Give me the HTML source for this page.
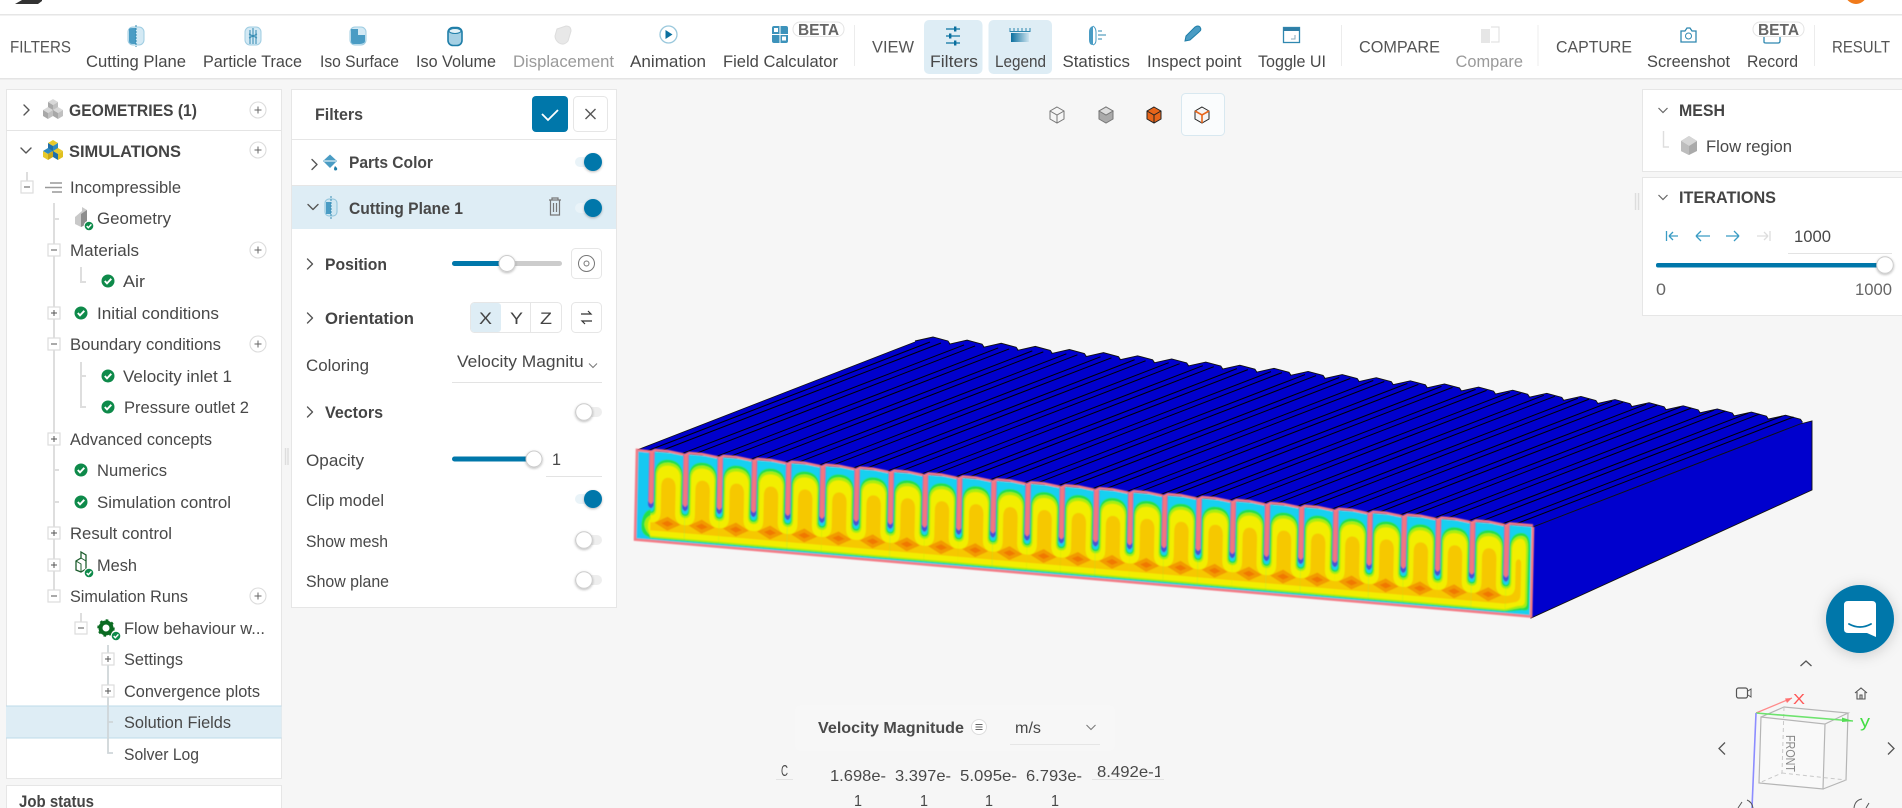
<!DOCTYPE html>
<html lang="en">
<head>
<meta charset="utf-8">
<title>Filters</title>
<style>
html,body{margin:0;padding:0;background:#f6f6f6;overflow:hidden}
svg{display:block}
text{font-family:"Liberation Sans",Arial,sans-serif;font-size:17px;fill:#484848}
.s{font-size:16.5px}
.h{font-size:17px}
.b{font-weight:700;fill:#444}
.g{fill:#9a9a9a}
.n{fill:none;stroke:#555;stroke-width:1.4;stroke-linecap:round;stroke-linejoin:round}
.l{fill:none;stroke:#dedede;stroke-width:2}
.p{fill:#fff;stroke:#e6e6e6;stroke-width:1}
</style>
</head>
<body>
<svg xmlns="http://www.w3.org/2000/svg" width="1902" height="808" viewBox="0 0 1902 808">
<defs>
<filter id="bl" x="-2%" y="-10%" width="104%" height="120%"><feGaussianBlur stdDeviation="0.6"/></filter>
<filter id="sh" x="-20%" y="-20%" width="140%" height="140%"><feDropShadow dx="0" dy="1" stdDeviation="1.2" flood-color="#000" flood-opacity=".28"/></filter>
<filter id="sc" x="-30%" y="-30%" width="160%" height="160%"><feDropShadow dx="0" dy="2" stdDeviation="7" flood-color="#000" flood-opacity=".18"/></filter>
<linearGradient id="lg" x1="0" x2="1" y1="0" y2="0"><stop offset="0" stop-color="#0a6f9e"/><stop offset="1" stop-color="#cde4ef"/></linearGradient>
<clipPath id="cv"><rect x="450" y="345" width="134" height="30"/></clipPath>
<clipPath id="cl"><rect x="1090" y="755" width="70" height="30"/></clipPath>

<g id="c">
<rect width="34.4" height="90" fill="#16d0f0"/>
<path d="M0,60Q3.2,60 3.2,55V22C3.2,12 9,7 17.2,7C25.4,7 31.2,12 31.2,22V55Q31.2,60 34.4,60V87H0Z" fill="#22e04a"/>
<path d="M0,62Q4.4,62 4.4,56V23C4.4,14 10,10 17.2,10C24.4,10 30,14 30,23V56Q30,62 34.4,62V86H0Z" fill="#a8ee10"/>
<path d="M0,64Q5.6,64 5.6,57V25C5.6,16 11,13 17.2,13C23.4,13 28.8,16 28.8,25V57Q28.8,64 34.4,64V84.5H0Z" fill="#f2ee00"/>
<path d="M0,71Q10,71 10,60V35C10,28 13,25 17.2,25C21.4,25 24.4,28 24.4,35V60Q24.4,71 34.4,71V79H0Z" fill="#f6c800"/>
<path d="M17,64L30,71L17,78L4,71Z" fill="#f29a00"/>
<path d="M17,68L23,71L17,74L11,71Z" fill="#f07800"/>
<path d="M-2.9,0V54Q0,60 2.9,54V0Z" fill="#4a52d0"/>
<path d="M-2.3,0V50Q0,55 2.3,50V0Z" fill="#f2747f"/>
<path d="M-2,1.5L3,-1.5H16L32,.5" fill="none" stroke="#f47a85" stroke-width="2.6"/>
</g>

<path id="fl" d="M647,451L930,342M658,452L941,343" stroke="#000" stroke-width="1" fill="none"/>
<g id="bp">
<polygon points="915,341 933,337 948,341 950,344 950,350 915,350" fill="#0000cd"/>
<path d="M915,341L933,337L948,341L950,344" fill="none" stroke="#111" stroke-width=".9"/>
</g>

<g id="ck"><circle r="6.5" fill="#0e8a4a"/><path d="M-3.2,0L-1,2.4L3.3,-2.2" fill="none" stroke="#fff" stroke-width="1.9"/></g>
<g id="ckb"><circle r="4.8" fill="#0e8a4a" stroke="#fff" stroke-width="1"/><path d="M-2.3,0L-.7,1.7L2.4,-1.6" fill="none" stroke="#fff" stroke-width="1.4"/></g>
<g id="mi"><rect x="-6" y="-6" width="12" height="12" fill="#fff" stroke="#ddd" stroke-width="1.2"/><path d="M-3,0H3" stroke="#555"/></g>
<g id="pl"><rect x="-6" y="-6" width="12" height="12" fill="#fff" stroke="#ddd" stroke-width="1.2"/><path d="M-3,0H3M0,-3V3" stroke="#555"/></g>
<g id="pc"><circle r="8" fill="#fff" stroke="#dcdcdc" stroke-width="1.1"/><path d="M-3.5,0H3.5M0,-3.5V3.5" stroke="#666" stroke-width="1"/></g>
<g id="cu"><path d="M-5,-2L0,-5L5,-2L0,1Z" fill="#d8d8d8"/><path d="M-5,-2V4L0,7V1Z" fill="#a8a8a8"/><path d="M5,-2V4L0,7V1Z" fill="#c0c0c0"/></g>
<g id="off"><rect x="-9" y="-5" width="27" height="10" rx="5" fill="#eee"/><circle r="8.3" fill="#fff" stroke="#ccc" filter="url(#sh)"/></g>
<g id="on"><rect x="-18" y="-5" width="25" height="10" rx="5" fill="#e9f3f8"/><circle r="9" fill="#0077aa" filter="url(#sh)"/></g>
<g id="cyl"><rect x="-8" y="-9" width="16" height="18" rx="5" fill="#d3e9f4" stroke="#9fcde2"/></g>
</defs>

<rect width="1902" height="808" fill="#f6f6f6"/>

<!-- top bars -->
<rect width="1902" height="14" fill="#fff"/>
<rect y="14" width="1902" height="1.5" fill="#e6e6e6"/>
<rect y="15.5" width="1902" height="62.5" fill="#fff"/>
<rect y="78" width="1902" height="1.5" fill="#e4e4e4"/>
<path d="M15,4L22,0H42V1L38,4Z" fill="#333"/>
<circle cx="1856" cy="-7" r="11" fill="#f07a1a"/>
<rect x="924" y="20" width="58.5" height="54" rx="5" fill="#deedf5"/>
<rect x="988.5" y="20" width="63.5" height="54" rx="5" fill="#deedf5"/>
<path d="M854.5,25V66M1341.5,25V66M1538,25V66M1814.5,25V66" stroke="#ececec"/>

<!-- toolbar icons -->
<use href="#cyl" x="136" y="36"/><path d="M129,30Q128,28 133,28H136V44H133Q129,44 129,41Z" fill="#4a9cc4"/><path d="M136,25V47" stroke="#2f88b0" stroke-dasharray="2 1"/>
<use href="#cyl" x="253" y="36"/><path d="M250,30V44M253,28V44M256,30V44M249,38L257,34M249,34L257,38" stroke="#2f88b0" stroke-width="1"/>
<use href="#cyl" x="358" y="36"/><path d="M351,35H365V41Q365,44 358,44H354Q351,44 351,41ZM351,29H358V35H351Z" fill="#4a9cc4"/>
<rect x="448" y="27.5" width="14" height="18" rx="5" fill="#a5d0e4" stroke="#1f7ea8" stroke-width="1.6"/><ellipse cx="455" cy="31" rx="6" ry="2.5" fill="#e4f2f8" stroke="#1f7ea8"/>
<path d="M557,29L566,26Q571,26 571,31L568,41Q564,46 559,43Q555,40 555,36Z" fill="#e8e8e8" stroke="#ddd"/>
<circle cx="668.5" cy="34.5" r="8.5" fill="#fff" stroke="#9ac8dc" stroke-width="1.3"/><path d="M665.5,30V39L672.5,34.5Z" fill="#0a6f9e"/>
<rect x="772" y="26" width="16" height="17" rx="2" fill="#3d93bb"/><path d="M780,26V43M772,34.5H788" stroke="#fff"/><rect x="774" y="28" width="4" height="4" fill="#fff"/><rect x="782" y="36.5" width="4" height="4" fill="#fff"/>
<rect x="793" y="22" width="51" height="14.5" rx="7" fill="#fff" stroke="#e4e4e4"/>
<text x="798" y="35" class="b" style="font-size:16px;fill:#666" textLength="41" lengthAdjust="spacingAndGlyphs">BETA</text>
<path d="M946,29H960M946,36H960M946,43H960" stroke="#2f88b0" stroke-width="1.5"/><rect x="954" y="26.5" width="2.4" height="5" fill="#0a6f9e"/><rect x="949" y="33.5" width="2.4" height="5" fill="#0a6f9e"/><rect x="954" y="40.5" width="2.4" height="5" fill="#0a6f9e"/>
<path d="M1010,28V31.5H1030V28M1014,28V31M1018,28V31M1022,28V31M1026,28V31" stroke="#2f88b0" fill="none"/><rect x="1011" y="33" width="18" height="9" fill="url(#lg)"/>
<path d="M1093,26Q1089,27 1089,32V40Q1089,45 1093,45V26Z" fill="#4a9cc4"/><path d="M1093,26Q1096,28 1096,32V40Q1096,44 1093,45" fill="none" stroke="#4a9cc4"/><path d="M1098,31H1102M1098,35H1106M1098,39H1102" stroke="#2f88b0"/>
<path d="M1185,41L1186,36L1195,27Q1198,25 1200,27Q1202,30 1199,32L1190,40Z" fill="#4a9cc4" stroke="#1f7ea8"/>
<rect x="1283.5" y="27.5" width="16" height="15" fill="#fff" stroke="#2f88b0" stroke-width="1.3"/><rect x="1283.5" y="27.5" width="16" height="3.5" fill="#2f7ea6"/><path d="M1295,35V39H1291" stroke="#8ab" fill="none"/>
<path d="M1481,29H1490V43H1481Z" fill="#e6e6e6"/><path d="M1491,27H1499V42H1491" fill="none" stroke="#ddd"/>
<path d="M1681,31H1685L1687,28H1690L1692,31H1696V42H1681Z" fill="#fff" stroke="#2f88b0" stroke-width="1.3"/><circle cx="1688.5" cy="36" r="3" fill="none" stroke="#2f88b0"/>
<path d="M1764,36V42Q1764,43 1766,43H1778Q1780,43 1780,41V36" fill="none" stroke="#2f88b0" stroke-width="1.3"/>
<rect x="1753" y="22" width="51" height="14.5" rx="7" fill="#fff" stroke="#e4e4e4"/>
<text x="1758" y="35" class="b" style="font-size:16px;fill:#666" textLength="41" lengthAdjust="spacingAndGlyphs">BETA</text>

<!-- toolbar text -->
<text class="h" x="10" y="52.5" textLength="61" lengthAdjust="spacingAndGlyphs" style="fill:#555">FILTERS</text>
<text class="s" x="86" y="67" textLength="100" lengthAdjust="spacingAndGlyphs">Cutting Plane</text>
<text class="s" x="203" y="67" textLength="99" lengthAdjust="spacingAndGlyphs">Particle Trace</text>
<text class="s" x="320" y="67" textLength="79" lengthAdjust="spacingAndGlyphs">Iso Surface</text>
<text class="s" x="416" y="67" textLength="80" lengthAdjust="spacingAndGlyphs">Iso Volume</text>
<text class="s g" x="513" y="67" textLength="101" lengthAdjust="spacingAndGlyphs">Displacement</text>
<text class="s" x="630" y="67" textLength="76" lengthAdjust="spacingAndGlyphs">Animation</text>
<text class="s" x="723" y="67" textLength="115" lengthAdjust="spacingAndGlyphs">Field Calculator</text>
<text class="h" x="872" y="52.5" textLength="42" lengthAdjust="spacingAndGlyphs" style="fill:#555">VIEW</text>
<text class="s" x="930" y="67" textLength="48" lengthAdjust="spacingAndGlyphs">Filters</text>
<text class="s" x="995" y="67" textLength="51" lengthAdjust="spacingAndGlyphs">Legend</text>
<text class="s" x="1062.5" y="67" textLength="67.5" lengthAdjust="spacingAndGlyphs">Statistics</text>
<text class="s" x="1147" y="67" textLength="94.5" lengthAdjust="spacingAndGlyphs">Inspect point</text>
<text class="s" x="1258" y="67" textLength="68" lengthAdjust="spacingAndGlyphs">Toggle UI</text>
<text class="h" x="1359" y="52.5" textLength="81" lengthAdjust="spacingAndGlyphs" style="fill:#555">COMPARE</text>
<text class="s g" x="1455.5" y="67" textLength="67.5" lengthAdjust="spacingAndGlyphs">Compare</text>
<text class="h" x="1556" y="52.5" textLength="76" lengthAdjust="spacingAndGlyphs" style="fill:#555">CAPTURE</text>
<text class="s" x="1647" y="67" textLength="83" lengthAdjust="spacingAndGlyphs">Screenshot</text>
<text class="s" x="1747" y="67" textLength="51" lengthAdjust="spacingAndGlyphs">Record</text>
<text class="h" x="1832" y="52.5" textLength="58" lengthAdjust="spacingAndGlyphs" style="fill:#555">RESULT</text>

<!-- 3D model -->
<polygon points="637,450 915,342 1800,424 1533,527" fill="#0000cd" stroke="#111" stroke-width=".8"/>
<use href="#bp"/><use href="#bp" x="34.1" y="3.13"/><use href="#bp" x="68.2" y="6.26"/><use href="#bp" x="102.3" y="9.39"/><use href="#bp" x="136.4" y="12.52"/><use href="#bp" x="170.5" y="15.65"/><use href="#bp" x="204.6" y="18.78"/><use href="#bp" x="238.7" y="21.91"/><use href="#bp" x="272.8" y="25.04"/><use href="#bp" x="306.9" y="28.17"/><use href="#bp" x="341" y="31.3"/><use href="#bp" x="375.1" y="34.43"/><use href="#bp" x="409.2" y="37.56"/><use href="#bp" x="443.3" y="40.69"/><use href="#bp" x="477.4" y="43.82"/><use href="#bp" x="511.5" y="46.95"/><use href="#bp" x="545.6" y="50.08"/><use href="#bp" x="579.7" y="53.21"/><use href="#bp" x="613.8" y="56.34"/><use href="#bp" x="647.9" y="59.47"/><use href="#bp" x="682" y="62.6"/><use href="#bp" x="716.1" y="65.73"/><use href="#bp" x="750.2" y="68.86"/><use href="#bp" x="784.3" y="71.99"/><use href="#bp" x="818.4" y="75.12"/><use href="#bp" x="852.5" y="78.25"/>
<polygon points="1533,527 1800,424 1812,421 1812,490 1531,618" fill="#0000cd" stroke="#111" stroke-width=".9"/>
<use href="#fl"/><use href="#fl" x="34.1" y="2.96"/><use href="#fl" x="68.2" y="5.92"/><use href="#fl" x="102.3" y="8.88"/><use href="#fl" x="136.4" y="11.84"/><use href="#fl" x="170.5" y="14.8"/><use href="#fl" x="204.6" y="17.76"/><use href="#fl" x="238.7" y="20.72"/><use href="#fl" x="272.8" y="23.68"/><use href="#fl" x="306.9" y="26.64"/><use href="#fl" x="341" y="29.6"/><use href="#fl" x="375.1" y="32.56"/><use href="#fl" x="409.2" y="35.52"/><use href="#fl" x="443.3" y="38.48"/><use href="#fl" x="477.4" y="41.44"/><use href="#fl" x="511.5" y="44.4"/><use href="#fl" x="545.6" y="47.36"/><use href="#fl" x="579.7" y="50.32"/><use href="#fl" x="613.8" y="53.28"/><use href="#fl" x="647.9" y="56.24"/><use href="#fl" x="682" y="59.2"/><use href="#fl" x="716.1" y="62.16"/><use href="#fl" x="750.2" y="65.12"/><use href="#fl" x="784.3" y="68.08"/><use href="#fl" x="818.4" y="71.04"/><use href="#fl" x="852.5" y="74"/>

<g transform="matrix(1,.0859,-.022,1,637,450)" filter="url(#bl)">
<rect x="0" y="0" width="16" height="89" fill="#16c8f2"/>
<path d="M15,58C9,60 6,66 6,76Q6,84 14,86L15,88Z" fill="#22e04a"/>
<path d="M15,64C11,66 9,70 9,74Q10,80 15,84Z" fill="#a8ee10"/>
<path d="M15,67C13,70 12,73 13,78L15,84Z" fill="#f2ee00"/>
<use href="#c" x="15"/><use href="#c" x="49.2"/><use href="#c" x="83.4"/><use href="#c" x="117.6"/><use href="#c" x="151.8"/><use href="#c" x="186"/><use href="#c" x="220.2"/><use href="#c" x="254.4"/><use href="#c" x="288.6"/><use href="#c" x="322.8"/><use href="#c" x="357"/><use href="#c" x="391.2"/><use href="#c" x="425.4"/><use href="#c" x="459.6"/><use href="#c" x="493.8"/><use href="#c" x="528"/><use href="#c" x="562.2"/><use href="#c" x="596.4"/><use href="#c" x="630.6"/><use href="#c" x="664.8"/><use href="#c" x="699"/><use href="#c" x="733.2"/><use href="#c" x="767.4"/><use href="#c" x="801.6"/><use href="#c" x="835.8"/>
<g transform="translate(870,0)">
<rect width="26" height="89.5" fill="#16d0f0"/>
<path d="M0,60Q3.2,60 3.2,55V22C3.2,12 9,7 15,7C21,7 23.5,12 23.5,22V80Q23.5,85 17,84L0,87Z" fill="#22e04a"/>
<path d="M0,62Q4.4,62 4.4,56V23C4.4,14 10,10 15,10C20,10 21.5,14 21.5,23V77Q21.5,82 15,82L0,86Z" fill="#a8ee10"/>
<path d="M0,64Q5.6,64 5.6,57V25C5.6,16 11,13 14,13C18,13 19.5,16 19.5,25V75Q19.5,80 13,80L0,84.5Z" fill="#f2ee00"/>
<path d="M0,71Q9.5,71 9.5,60V38C10,32 15,32 15,38V69Q15,76 8,77L0,79Z" fill="#f6c800"/>
<path d="M-2.9,0V54Q0,60 2.9,54V0Z" fill="#4a52d0"/>
<path d="M-2.3,0V50Q0,55 2.3,50V0Z" fill="#f2747f"/>
<path d="M-2,1.5L3,-1.5H26" fill="none" stroke="#f47a85" stroke-width="2.6"/>
</g>
<path d="M15,.5L0,0V89.5H896V0" fill="none" stroke="#f47a85" stroke-width="2.6"/>
</g>

<!-- left panels -->
<rect class="p" x="6.5" y="89.5" width="275" height="689"/>
<path d="M6,130.5H281" stroke="#e4e4e4"/>
<rect class="p" x="6.5" y="785.5" width="275" height="40"/>
<rect x="6" y="706" width="275.5" height="32" fill="#deedf5"/>
<path d="M6,706H281.5M6,738H281.5" stroke="#bddbe9"/>
<path d="M285.5,448V465M288,448V465" stroke="#ddd" stroke-width="1.4"/>

<path class="n" d="M24,105L29,110L24,115"/>
<path class="n" d="M21,148L26,153L31,148"/>
<use href="#cu" x="53" y="104"/><use href="#cu" x="48" y="112"/><use href="#cu" x="58" y="112"/>
<g transform="translate(53,145)"><path d="M-5,-2L0,-5L5,-2L0,1Z" fill="#e8c92a"/><path d="M-5,-2V4L0,7V1Z" fill="#1f6fa8"/><path d="M5,-2V4L0,7V1Z" fill="#2f8bc0"/></g>
<g transform="translate(48,153)"><path d="M-5,-2L0,-5L5,-2L0,1Z" fill="#2f8bc0"/><path d="M-5,-2V4L0,7V1Z" fill="#e8c92a"/><path d="M5,-2V4L0,7V1Z" fill="#c9a81a"/></g>
<g transform="translate(58,153)"><path d="M-5,-2L0,-5L5,-2L0,1Z" fill="#e8c92a"/><path d="M-5,-2V4L0,7V1Z" fill="#1f6fa8"/><path d="M5,-2V4L0,7V1Z" fill="#e0c020"/></g>

<use href="#pc" x="258" y="110"/><use href="#pc" x="258" y="150"/><use href="#pc" x="258" y="250"/><use href="#pc" x="258" y="344"/><use href="#pc" x="258" y="596"/>

<!-- tree lines -->
<path class="l" d="M27,172V181M54,203V592M54,219H59M54,470H59M54,502H59M81,267V282H86M81,362V407H86M81,376H86M81,613V622"/>
<path d="M108,645V753H113M108,722H113" fill="none" stroke="#cfd6d9" stroke-width="1.8"/>
<use href="#mi" x="27" y="187"/><use href="#mi" x="54" y="250"/><use href="#pl" x="54" y="313"/><use href="#mi" x="54" y="344"/><use href="#pl" x="54" y="439"/><use href="#pl" x="54" y="533"/><use href="#pl" x="54" y="565"/><use href="#mi" x="54" y="596"/><use href="#mi" x="81" y="628"/><use href="#pl" x="108" y="659"/><use href="#pl" x="108" y="691"/>

<path d="M50,183H62M45,187.5H62M52,192H62" stroke="#999" stroke-width="1.4"/>
<path d="M75,217L82,211V207L87,210V224L81,227L75,224Z" fill="#c9c9c9"/><path d="M81,214L87,210V224L81,227Z" fill="#8d8d8d"/>
<use href="#ckb" x="89" y="226"/>
<use href="#ck" x="108" y="281"/><use href="#ck" x="81" y="313"/><use href="#ck" x="108" y="376"/><use href="#ck" x="108" y="407"/><use href="#ck" x="81" y="470"/><use href="#ck" x="81" y="502"/>
<path d="M76,570V561L81,558V552L86,555V569L81,572Z" fill="#fff" stroke="#1d5d2e" stroke-width="1.3"/><path d="M81,558L86,561M76,561L81,564V572" fill="none" stroke="#1d5d2e"/>
<use href="#ckb" x="89" y="573"/>
<g transform="translate(106,628)"><circle r="5.5" fill="none" stroke="#0b6b22" stroke-width="4"/><circle r="7.5" fill="none" stroke="#0b6b22" stroke-width="2.4" stroke-dasharray="2.6 3.2"/></g>
<use href="#ckb" x="116" y="636"/>

<text class="b" x="69" y="116" textLength="128" lengthAdjust="spacingAndGlyphs">GEOMETRIES (1)</text>
<text class="b" x="69" y="157" textLength="112" lengthAdjust="spacingAndGlyphs">SIMULATIONS</text>
<text x="70" y="193" textLength="111" lengthAdjust="spacingAndGlyphs">Incompressible</text>
<text x="97" y="224" textLength="74" lengthAdjust="spacingAndGlyphs">Geometry</text>
<text x="70" y="256" textLength="69" lengthAdjust="spacingAndGlyphs">Materials</text>
<text x="123" y="287" textLength="22" lengthAdjust="spacingAndGlyphs">Air</text>
<text x="97" y="319" textLength="122" lengthAdjust="spacingAndGlyphs">Initial conditions</text>
<text x="70" y="350" textLength="151" lengthAdjust="spacingAndGlyphs">Boundary conditions</text>
<text x="123" y="382" textLength="109" lengthAdjust="spacingAndGlyphs">Velocity inlet 1</text>
<text x="124" y="413" textLength="125" lengthAdjust="spacingAndGlyphs">Pressure outlet 2</text>
<text x="70" y="445" textLength="142" lengthAdjust="spacingAndGlyphs">Advanced concepts</text>
<text x="97" y="476" textLength="70" lengthAdjust="spacingAndGlyphs">Numerics</text>
<text x="97" y="508" textLength="134" lengthAdjust="spacingAndGlyphs">Simulation control</text>
<text x="70" y="539" textLength="102" lengthAdjust="spacingAndGlyphs">Result control</text>
<text x="97" y="571" textLength="40" lengthAdjust="spacingAndGlyphs">Mesh</text>
<text x="70" y="602" textLength="118" lengthAdjust="spacingAndGlyphs">Simulation Runs</text>
<text x="124" y="634" textLength="141" lengthAdjust="spacingAndGlyphs">Flow behaviour w...</text>
<text x="124" y="665" textLength="59" lengthAdjust="spacingAndGlyphs">Settings</text>
<text x="124" y="697" textLength="136" lengthAdjust="spacingAndGlyphs">Convergence plots</text>
<text x="124" y="728" textLength="107" lengthAdjust="spacingAndGlyphs">Solution Fields</text>
<text x="124" y="760" textLength="75" lengthAdjust="spacingAndGlyphs">Solver Log</text>
<text class="b" x="19" y="807" textLength="75" lengthAdjust="spacingAndGlyphs">Job status</text>

<!-- filters panel -->
<rect class="p" x="291.5" y="89.5" width="325" height="518"/>
<path d="M292,139.5H616M292,185.5H616" stroke="#e6e6e6"/>
<rect x="292" y="186" width="324" height="43" fill="#deedf5"/>
<text x="315" y="120" textLength="48" lengthAdjust="spacingAndGlyphs" style="font-weight:700;fill:#484848">Filters</text>
<rect x="532" y="96" width="36" height="36" rx="4" fill="#0077aa"/><path d="M542,114L548,120L558,110" fill="none" stroke="#fff" stroke-width="1.8"/>
<rect x="573.5" y="96.5" width="34" height="35" rx="4" fill="#fff" stroke="#e6e6e6"/><path d="M585.5,109L595.5,119M595.5,109L585.5,119" stroke="#555" stroke-width="1.4"/>
<path class="n" d="M312,159.5L317,164.5L312,169.5"/>
<path d="M323,161L330,154.5L337,161L330,168Z" fill="#4a9cc4"/><path d="M324,161H336" stroke="#fff"/><path d="M335,166Q333,170 335,170.5Q338,170.5 337,168Z" fill="#1f7ea8"/>
<text x="349" y="168" textLength="84" lengthAdjust="spacingAndGlyphs" style="font-weight:700;fill:#484848">Parts Color</text>
<use href="#on" x="593" y="162"/>
<path class="n" d="M308,204.5L313,209.5L318,204.5"/>
<rect x="325" y="199" width="12" height="17" rx="4" fill="#cfe7f2" stroke="#8cc2da"/><path d="M326,202H331V214H326Z" fill="#4a9cc4"/><path d="M331,196V219" stroke="#3a8db5" stroke-dasharray="2 1"/>
<text x="349" y="214" textLength="114" lengthAdjust="spacingAndGlyphs" style="font-weight:700;fill:#484848">Cutting Plane 1</text>
<path d="M549,200H561M552,200V198H558V200M550.5,200.5V215H559.5V200.5M553.5,203V212M556.5,203V212" fill="none" stroke="#777" stroke-width="1.2"/>
<use href="#on" x="593" y="208"/>

<path class="n" d="M307.5,259L312.5,264L307.5,269"/>
<text class="b" x="325" y="270" textLength="62" lengthAdjust="spacingAndGlyphs">Position</text>
<rect x="452" y="261" width="110" height="5" rx="2.5" fill="#ccc"/><rect x="452" y="261" width="55" height="5" rx="2.5" fill="#0077aa"/><circle cx="507" cy="263.5" r="8" fill="#fff" stroke="#ccc" filter="url(#sh)"/>
<rect x="571.5" y="248.5" width="30" height="30" rx="4" fill="#fff" stroke="#e6e6e6"/><circle cx="586.5" cy="263.5" r="8" fill="none" stroke="#777"/><circle cx="586.5" cy="263.5" r="2.5" fill="none" stroke="#777"/>
<path class="n" d="M307.5,313L312.5,318L307.5,323"/>
<text class="b" x="325" y="324" textLength="89" lengthAdjust="spacingAndGlyphs">Orientation</text>
<rect x="470.5" y="302.5" width="91" height="30" rx="4" fill="#fff" stroke="#e6e6e6"/><rect x="471" y="303" width="30" height="29" rx="3" fill="#deedf5"/><path d="M530.5,303V332" stroke="#e6e6e6"/>
<text x="479" y="324" textLength="13" lengthAdjust="spacingAndGlyphs" style="fill:#444">X</text>
<text x="510" y="324" textLength="13" lengthAdjust="spacingAndGlyphs" style="fill:#444">Y</text>
<text x="540" y="324" textLength="12" lengthAdjust="spacingAndGlyphs" style="fill:#444">Z</text>
<rect x="571.5" y="302.5" width="30" height="30" rx="4" fill="#fff" stroke="#e6e6e6"/><path d="M581,314H591L588,311M592,321H582L585,324" fill="none" stroke="#333" stroke-width="1.2"/>
<text x="306" y="371" textLength="63" lengthAdjust="spacingAndGlyphs">Coloring</text>
<g clip-path="url(#cv)"><text x="457" y="367" textLength="146" lengthAdjust="spacingAndGlyphs">Velocity Magnitude</text></g>
<path d="M589,363.5L593,367.5L597,363.5" fill="none" stroke="#777"/><path d="M452,382.5H602" stroke="#e3e3e3"/>
<path class="n" d="M307.5,407L312.5,412L307.5,417"/>
<text class="b" x="325" y="418" textLength="58" lengthAdjust="spacingAndGlyphs">Vectors</text>
<use href="#off" x="584" y="412"/>
<text x="306" y="466" textLength="58" lengthAdjust="spacingAndGlyphs">Opacity</text>
<rect x="452" y="456.5" width="82" height="5" rx="2.5" fill="#0077aa"/><circle cx="534" cy="459" r="8" fill="#fff" stroke="#ccc" filter="url(#sh)"/>
<text x="552" y="465" textLength="9" lengthAdjust="spacingAndGlyphs">1</text><path d="M546,476.5H602" stroke="#e3e3e3"/>
<text x="306" y="506" textLength="78" lengthAdjust="spacingAndGlyphs">Clip model</text><use href="#on" x="593" y="499"/>
<text x="306" y="547" textLength="82" lengthAdjust="spacingAndGlyphs">Show mesh</text><use href="#off" x="584" y="540"/>
<text x="306" y="587" textLength="83" lengthAdjust="spacingAndGlyphs">Show plane</text><use href="#off" x="584" y="580"/>

<!-- view cube buttons -->
<rect x="1181.5" y="93.5" width="43" height="42" rx="4" fill="#fafcfd" stroke="#d8e8f0"/>
<path d="M1057,107L1064,111V119L1057,123L1050,119V111ZM1050,111L1057,115L1064,111M1057,115V123" fill="none" stroke="#777" stroke-width="1"/>
<path d="M1106,107L1113,111V119L1106,123L1099,119V111Z" fill="#aaa" stroke="#777"/><path d="M1099,111L1106,115L1113,111L1106,107Z" fill="#ddd" stroke="#777"/>
<path d="M1154,107L1161,111V119L1154,123L1147,119V111Z" fill="#e8651a" stroke="#222"/><path d="M1147,111L1154,115L1161,111M1154,115V123" fill="none" stroke="#222"/>
<path d="M1202,107L1209,111V119L1202,123L1195,119V111Z" fill="#f5f5f5" stroke="#222"/><path d="M1195,111L1202,115L1209,111M1202,115V123" fill="none" stroke="#e8651a" stroke-width="1.6"/>

<!-- right panels -->
<rect class="p" x="1642.5" y="89.5" width="262" height="82"/>
<rect class="p" x="1642.5" y="177.5" width="262" height="138"/>
<path d="M1635.5,193V210M1638.5,193V210" stroke="#ddd" stroke-width="1.4"/>
<path d="M1658.5,108L1663,112.5L1667.5,108" fill="none" stroke="#666" stroke-width="1.2"/>
<text class="b" x="1679" y="116" textLength="46" lengthAdjust="spacingAndGlyphs">MESH</text>
<path class="l" d="M1663.5,131V147H1669" style="stroke-width:1.4"/>
<path d="M1689,136L1697,141V151L1689,155L1681,151V141Z" fill="#aaa"/><path d="M1689,136L1697,141L1689,146L1681,141Z" fill="#d6d6d6"/><path d="M1681,141L1689,146V155L1681,151Z" fill="#bdbdbd"/>
<text x="1706" y="152" textLength="86" lengthAdjust="spacingAndGlyphs">Flow region</text>
<path d="M1658.5,195L1663,199.5L1667.5,195" fill="none" stroke="#666" stroke-width="1.2"/>
<text class="b" x="1679" y="203" textLength="97" lengthAdjust="spacingAndGlyphs">ITERATIONS</text>
<path d="M1666.5,231V241M1669,236H1678M1669,236L1673,232M1669,236L1673,240" fill="none" stroke="#3a9cc4" stroke-width="1.3"/>
<path d="M1696,236H1710M1696,236L1701,231M1696,236L1701,241" fill="none" stroke="#3a9cc4" stroke-width="1.3"/>
<path d="M1726,236H1739M1739,236L1734,231M1739,236L1734,241" fill="none" stroke="#3a9cc4" stroke-width="1.3"/>
<path d="M1757,236H1768M1768,236L1764,232M1768,236L1764,240M1770,231V241" fill="none" stroke="#ddd" stroke-width="1.3"/>
<text x="1794" y="242" textLength="37" lengthAdjust="spacingAndGlyphs">1000</text><path d="M1788,253.5H1892" stroke="#e3e3e3"/>
<rect x="1656" y="263" width="229" height="4.5" rx="2" fill="#0077aa"/><circle cx="1885" cy="265" r="8.3" fill="#fff" stroke="#ccc" filter="url(#sh)"/>
<text x="1656" y="295" textLength="10" lengthAdjust="spacingAndGlyphs" style="fill:#666">0</text>
<text x="1855" y="295" textLength="37" lengthAdjust="spacingAndGlyphs" style="fill:#666">1000</text>

<!-- legend -->
<rect x="795" y="705" width="320" height="46" rx="6" fill="#f7f7f7"/>
<text x="818" y="733" textLength="146" lengthAdjust="spacingAndGlyphs" style="font-weight:700;fill:#4a4a4a;font-size:16px">Velocity Magnitude</text>
<circle cx="979" cy="727" r="7.5" fill="#fff" stroke="#ddd"/><path d="M975.5,724.5H982.5M975.5,727H982.5M975.5,729.5H982.5" stroke="#666"/>
<text x="1015" y="733" textLength="26" lengthAdjust="spacingAndGlyphs" style="font-size:16px">m/s</text>
<path d="M1086.5,725L1091,729.5L1095.5,725" fill="none" stroke="#777"/><path d="M1010,744.5H1100" stroke="#e6e6e6"/>
<text x="781" y="776" textLength="7" lengthAdjust="spacingAndGlyphs" style="font-size:16px">C</text><path d="M776,779.5H793M1092,779.5H1164" stroke="#e3e3e3"/>
<text x="830" y="781" textLength="56" lengthAdjust="spacingAndGlyphs" style="font-size:16px">1.698e-</text><text x="854" y="806" textLength="8" lengthAdjust="spacingAndGlyphs" style="font-size:16px">1</text>
<text x="895" y="781" textLength="56" lengthAdjust="spacingAndGlyphs" style="font-size:16px">3.397e-</text><text x="920" y="806" textLength="8" lengthAdjust="spacingAndGlyphs" style="font-size:16px">1</text>
<text x="960" y="781" textLength="57" lengthAdjust="spacingAndGlyphs" style="font-size:16px">5.095e-</text><text x="985" y="806" textLength="8" lengthAdjust="spacingAndGlyphs" style="font-size:16px">1</text>
<text x="1026" y="781" textLength="56" lengthAdjust="spacingAndGlyphs" style="font-size:16px">6.793e-</text><text x="1051" y="806" textLength="8" lengthAdjust="spacingAndGlyphs" style="font-size:16px">1</text>
<g clip-path="url(#cl)"><text x="1097" y="777" textLength="66" lengthAdjust="spacingAndGlyphs" style="font-size:16px">8.492e-1</text></g>

<!-- chat bubble -->
<circle cx="1860" cy="619" r="34" fill="#0077aa" filter="url(#sc)"/>
<path d="M1848,601H1872Q1876,601 1876,605V637L1867,633H1848Q1844,633 1844,629V605Q1844,601 1848,601Z" fill="#fff"/>
<path d="M1849,624Q1860,630 1871,624" fill="none" stroke="#0077aa" stroke-width="1.8" stroke-linecap="round"/>

<!-- gizmo -->
<path d="M1800.5,666L1806,661L1811.5,666" fill="none" stroke="#555" stroke-width="1.3"/>
<path d="M1725,742.5L1719,748.5L1725,754.5" fill="none" stroke="#555" stroke-width="1.3"/>
<path d="M1888,742.5L1894,748.5L1888,754.5" fill="none" stroke="#555" stroke-width="1.3"/>
<rect x="1736.5" y="688" width="11" height="10" rx="2" fill="none" stroke="#555" stroke-width="1.2"/><path d="M1748,691L1751,689V697L1748,695" fill="none" stroke="#555"/>
<path d="M1855,693L1861,688L1867,693M1857,692V699H1865V692M1860,699V695H1862V699" fill="none" stroke="#555" stroke-width="1.1"/>
<polygon points="1761,717 1825,724 1823,789 1759,783" fill="#fff" fill-opacity=".35" stroke="#b5b5b5" stroke-width="1.2"/>
<path d="M1761,717L1784,707L1848,713L1825,724M1848,713L1846,780L1823,789" fill="none" stroke="#b5b5b5" stroke-width="1.2"/>
<path d="M1784,707L1782,773L1759,783M1782,773L1846,780" fill="none" stroke="#c9c9c9" stroke-dasharray="4 3"/>
<text transform="translate(1786,735) rotate(90)" style="font-size:13px;fill:#888" textLength="37" lengthAdjust="spacingAndGlyphs">FRONT</text>
<path d="M1756,713L1792,698" stroke="#ff8a8a" stroke-width="1.3"/><path d="M1792,698L1785,698.5L1787,703Z" fill="#ff7070"/>
<path d="M1756,713L1853,721" stroke="#6de36d" stroke-width="1.6"/><path d="M1853,721L1842,717.5L1842,722Z" fill="#55dd55"/>
<path d="M1756,713L1752,808" stroke="#8c8cff" stroke-width="1.6"/>
<text x="1793" y="704" textLength="12" lengthAdjust="spacingAndGlyphs" style="font-size:15px;fill:#ff5555">X</text>
<text x="1860" y="727" textLength="10" lengthAdjust="spacingAndGlyphs" style="font-size:17px;fill:#44dd44">y</text>
<path d="M1747,800Q1752,802 1753,808M1738,808L1742,802" fill="none" stroke="#555"/>
<path d="M1854,808Q1855,800 1862,799M1866,808L1869,803" fill="none" stroke="#555"/>
</svg>
</body>
</html>
